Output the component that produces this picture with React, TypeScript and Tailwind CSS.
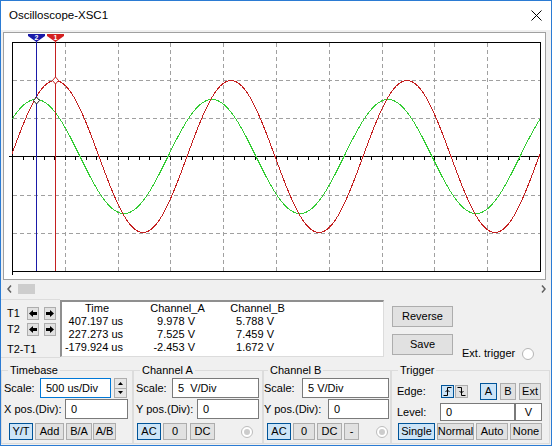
import React from 'react';

const RED = '#c42020';
const GREEN = '#33cc33';

function wave(amp: number, phase: number) {
  const pts: string[] = [];
  for (let x = 12; x <= 540; x++) {
    const y = 156.5 - amp * Math.sin((2 * Math.PI * (x - phase)) / 176);
    pts.push(`${x},${y.toFixed(1)}`);
  }
  return pts.join(' ');
}

function CursorHead({ x, label, color }: { x: number; label: string; color: string }) {
  return (
    <g>
      <polygon points={`${x - 8},34 ${x + 9},34 ${x + 9},36 ${x + 0.5},42 ${x - 8},36`} fill={color} />
      <text x={x + 0.5} y={39.5} fontSize="7" fontWeight="bold" fill="#fff" textAnchor="middle" fontFamily="Liberation Sans, Arial, sans-serif">
        {label}
      </text>
    </g>
  );
}

function Scope() {
  const vx = [65, 118, 170, 223, 276, 329, 382, 434, 487];
  const hy = [80, 118, 195, 233];
  const ticks = Array.from({ length: 49 }, (_, k) => Math.round(12 + 10.56 * (k + 1)) + 0.5);
  return (
    <svg width="541" height="246" viewBox="4 33 541 246" className="block">
      <g stroke="#a0a0a0" strokeDasharray="4 3" shapeRendering="crispEdges">
        {vx.map((x) => (
          <line key={x} x1={x + 0.5} y1={43} x2={x + 0.5} y2={271} />
        ))}
        {hy.map((y) => (
          <line key={y} x1={13} y1={y + 0.5} x2={540} y2={y + 0.5} />
        ))}
      </g>
      <g stroke="#000" shapeRendering="crispEdges" fill="none">
        <rect x={12.5} y={42.5} width={528} height={229} />
        <line x1={12.5} y1={271} x2={12.5} y2={275} />
        <line x1={9} y1={156.5} x2={541} y2={156.5} />
        {ticks.map((x) => (
          <line key={x} x1={x} y1={156} x2={x} y2={159.5} />
        ))}
      </g>
      <polyline points={wave(57, -8)} fill="none" stroke={GREEN} strokeWidth={1} shapeRendering="crispEdges" />
      <polyline points={wave(76, 11)} fill="none" stroke={RED} strokeWidth={1} shapeRendering="crispEdges" />
      <line x1={36.5} y1={36} x2={36.5} y2={271} stroke="#1a1aa8" shapeRendering="crispEdges" />
      <line x1={55.5} y1={36} x2={55.5} y2={271} stroke={RED} shapeRendering="crispEdges" />
      <CursorHead x={36} label="2" color="#1a1aa8" />
      <CursorHead x={55} label="1" color="#d42020" />
      <polygon points="55.5,77 58.5,80.5 55.5,84 52.5,80.5" fill="#fff" stroke={RED} />
      <polygon points="36.5,97 39.5,100.5 36.5,104 33.5,100.5" fill="#fff" stroke="#222" />
    </svg>
  );
}

function Btn({ label, on = false, className = '' }: { label: React.ReactNode; on?: boolean; className?: string }) {
  return (
    <div
      className={`flex items-center justify-center h-[17px] border leading-none shrink-0 ${
        on ? 'bg-[#cce4f7] border-[#005499]' : 'bg-[#e1e1e1] border-[#adadad]'
      } ${className}`}
    >
      {label}
    </div>
  );
}

function Field({ value, className = '', focus = false }: { value: string; className?: string; focus?: boolean }) {
  return (
    <div
      className={`h-[20px] bg-white border flex items-center pl-[5px] whitespace-pre shrink-0 ${
        focus ? 'border-[#0078d7]' : 'border-[#7a7a7a]'
      } ${className}`}
    >
      {value}
    </div>
  );
}

function Radio({ className = '' }: { className?: string }) {
  return (
    <div className={`w-[12px] h-[12px] rounded-full border border-[#bcbcbc] bg-white flex items-center justify-center shrink-0 ${className}`}>
      <div className="w-[6px] h-[6px] rounded-full bg-[#cccccc]" />
    </div>
  );
}

function ArrowBtn({ dir }: { dir: 'l' | 'r' }) {
  return (
    <div className="w-[12px] h-[13px] bg-[#e1e1e1] border border-[#adadad] flex items-center justify-center shrink-0">
      <svg width="8" height="7" viewBox="0 0 8 7">
        {dir === 'l' ? (
          <polygon points="0,3.5 4,0 4,2 8,2 8,5 4,5 4,7" fill="#000" />
        ) : (
          <polygon points="8,3.5 4,0 4,2 0,2 0,5 4,5 4,7" fill="#000" />
        )}
      </svg>
    </div>
  );
}

function Group({ title, className, legendClass, children }: { title: string; className: string; legendClass: string; children: React.ReactNode }) {
  return (
    <fieldset className={`h-[80px] border border-[#dcdcdc] shrink-0 ${className}`}>
      <legend className={`px-[2px] leading-[13px] ${legendClass}`}>{title}</legend>
      {children}
    </fieldset>
  );
}

export default function App() {
  return (
    <div className="w-[552px] h-[446px] border border-[#2b7bd3] bg-[#f0f0f0] flex flex-col font-['Liberation_Sans',Arial,sans-serif] text-[11px] text-black overflow-hidden select-none">
      <div className="h-[29px] bg-white flex items-center justify-between pl-[8px] pr-[9px] shrink-0">
        <span className="text-[11.5px]">Oscilloscope-XSC1</span>
        <svg width="11" height="11" viewBox="0 0 11 11">
          <path d="M0.5 0.5 L10.5 10.5 M10.5 0.5 L0.5 10.5" stroke="#000" strokeWidth="1" />
        </svg>
      </div>

      <div className="pt-[2px] pl-[2px] shrink-0">
        <div className="w-[543px] h-[248px] border border-[#a0a0a0] bg-white">
          <Scope />
        </div>
      </div>

      <div className="h-[17px] flex items-center justify-between shrink-0">
        <div className="flex items-center">
          <svg width="5" height="8" viewBox="0 0 5 8" className="ml-[6px]">
            <path d="M4 0.5 L1 4 L4 7.5" stroke="#606060" strokeWidth="1.5" fill="none" />
          </svg>
          <div className="ml-[6px] w-[17px] h-[10px] bg-[#cdcdcd]" />
        </div>
        <svg width="5" height="8" viewBox="0 0 5 8" className="mr-[5px]">
          <path d="M1 0.5 L4 4 L1 7.5" stroke="#606060" strokeWidth="1.5" fill="none" />
        </svg>
      </div>

      <div className="h-[62px] flex shrink-0">
        <div className="w-[59px] mt-[2px] h-[59px] border-t border-b border-[#dcdcdc] pl-[6px] pt-[7px] flex flex-col shrink-0">
          <div className="flex items-center h-[13px]">
            <span className="w-[20px]">T1</span>
            <ArrowBtn dir="l" />
            <div className="ml-[5px]">
              <ArrowBtn dir="r" />
            </div>
          </div>
          <div className="flex items-center h-[13px] mt-[3px]">
            <span className="w-[20px]">T2</span>
            <ArrowBtn dir="l" />
            <div className="ml-[5px]">
              <ArrowBtn dir="r" />
            </div>
          </div>
          <div className="h-[13px] leading-[13px] mt-[7px]">T2-T1</div>
        </div>

        <div className="mt-[3px] h-[57px] w-[324px] bg-white border-t-2 border-l-2 border-r border-b border-t-[#8f8f8f] border-l-[#8f8f8f] border-r-[#dcdcdc] border-b-[#dcdcdc] flex leading-[13px] shrink-0">
          <div className="w-[70px] flex flex-col">
            <div className="text-center">Time</div>
            <div className="text-right pr-[9px]">407.197 us</div>
            <div className="text-right pr-[9px]">227.273 us</div>
            <div className="text-right pr-[9px]">-179.924 us</div>
          </div>
          <div className="w-[91px] flex flex-col">
            <div className="text-center">Channel_A</div>
            <div className="text-right pr-[28px]">9.978 V</div>
            <div className="text-right pr-[28px]">7.525 V</div>
            <div className="text-right pr-[28px]">-2.453 V</div>
          </div>
          <div className="w-[69px] flex flex-col">
            <div className="text-center">Channel_B</div>
            <div className="text-right pr-[18px]">5.788 V</div>
            <div className="text-right pr-[18px]">7.459 V</div>
            <div className="text-right pr-[18px]">1.672 V</div>
          </div>
        </div>

        <div className="ml-[8px] mt-[9px] flex flex-col gap-[7px] shrink-0">
          <div className="w-[61px] h-[21px] bg-[#e1e1e1] border border-[#adadad] flex items-center justify-center">Reverse</div>
          <div className="w-[61px] h-[21px] bg-[#e1e1e1] border border-[#adadad] flex items-center justify-center">Save</div>
        </div>

        <div className="ml-[9px] mt-[50px] h-[13px] flex items-center shrink-0">
          <span>Ext. trigger</span>
          <div className="ml-[7px] w-[12px] h-[12px] rounded-full border border-[#b5b5b5] bg-white" />
        </div>
      </div>

      <div className="mt-[5px] flex shrink-0">
        <Group title="Timebase" className="w-[132px]" legendClass="ml-[6px]">
          <div className="mt-[1px] h-[20px] flex items-center pl-[2px]">
            <span className="w-[36px]">Scale:</span>
            <Field value="500 us/Div" focus className="w-[71px]" />
            <div className="ml-[3px] w-[13px] h-[20px] border border-[#adadad] bg-[#e6e6e6] flex flex-col">
              <div className="flex-1 flex items-center justify-center">
                <svg width="5" height="3" viewBox="0 0 5 3"><polygon points="0,3 2.5,0 5,3" fill="#000" /></svg>
              </div>
              <div className="flex-1 flex items-center justify-center border-t border-[#adadad]">
                <svg width="5" height="3" viewBox="0 0 5 3"><polygon points="0,0 2.5,3 5,0" fill="#000" /></svg>
              </div>
            </div>
          </div>
          <div className="mt-[1px] h-[20px] flex items-center pl-[2px]">
            <span className="w-[61px]">X pos.(Div):</span>
            <Field value="0" className="w-[63px]" />
          </div>
          <div className="mt-[4px] flex pl-[7px]">
            <Btn label="Y/T" on className="w-[24px]" />
            <Btn label="Add" className="ml-[2px] w-[29px]" />
            <Btn label="B/A" className="ml-[2px] w-[26px]" />
            <Btn label="A/B" className="ml-[1px] w-[23px]" />
          </div>
        </Group>

        <Group title="Channel A" className="w-[130px]" legendClass="ml-[6px]">
          <div className="mt-[1px] h-[20px] flex items-center pl-[2px]">
            <span className="w-[36px]">Scale:</span>
            <Field value="5  V/Div" className="w-[87px]" />
          </div>
          <div className="mt-[1px] h-[20px] flex items-center pl-[2px]">
            <span className="w-[61px]">Y pos.(Div):</span>
            <Field value="0" className="w-[62px]" />
          </div>
          <div className="mt-[4px] flex items-center pl-[3px]">
            <Btn label="AC" on className="w-[24px]" />
            <Btn label="0" className="ml-[2px] w-[24px]" />
            <Btn label="DC" className="ml-[3px] w-[25px]" />
            <Radio className="ml-[26px]" />
          </div>
        </Group>

        <Group title="Channel B" className="w-[128px]" legendClass="ml-[4px]">
          <div className="mt-[1px] h-[20px] flex items-center">
            <span className="w-[38px]">Scale:</span>
            <Field value="5 V/Div" className="w-[87px]" />
          </div>
          <div className="mt-[1px] h-[20px] flex items-center">
            <span className="w-[64px]">Y pos.(Div):</span>
            <Field value="0" className="w-[61px]" />
          </div>
          <div className="mt-[4px] flex items-center pl-[3px]">
            <Btn label="AC" on className="w-[24px]" />
            <Btn label="0" className="ml-[2px] w-[22px]" />
            <Btn label="DC" className="ml-[2px] w-[25px]" />
            <Btn label="-" className="ml-[2px] w-[15px]" />
            <Radio className="ml-[17px]" />
          </div>
        </Group>

        <Group title="Trigger" className="w-[159px]" legendClass="ml-[6px]">
          <div className="mt-[6px] h-[17px] flex items-center pl-[5px]">
            <span className="w-[44px]">Edge:</span>
            <div className="w-[13px] h-[13px] border border-[#005499] bg-[#cce4f7] flex items-center justify-center shrink-0">
              <svg width="9" height="9" viewBox="0 0 9 9">
                <path d="M0.5 8.5 H4.5 V0.5 H8.5 M2.5 5 L4.5 3 L6.5 5" stroke="#000" fill="none" strokeWidth="1" />
              </svg>
            </div>
            <div className="ml-[1px] w-[13px] h-[13px] border border-[#adadad] bg-[#e1e1e1] flex items-center justify-center shrink-0">
              <svg width="9" height="9" viewBox="0 0 9 9">
                <path d="M0.5 0.5 H4.5 V8.5 H8.5 M2.5 4 L4.5 6 L6.5 4" stroke="#000" fill="none" strokeWidth="1" />
              </svg>
            </div>
            <Btn label="A" on className="ml-[12px] w-[17px]" />
            <Btn label="B" className="ml-[3px] w-[16px]" />
            <Btn label="Ext" className="ml-[3px] w-[22px]" />
          </div>
          <div className="mt-[3px] h-[18px] flex items-center pl-[5px]">
            <span className="w-[43px]">Level:</span>
            <div className="w-[75px] h-[18px] bg-white border border-[#7a7a7a] flex items-center pl-[5px]">0</div>
            <div className="w-[27px] h-[18px] bg-white border border-[#7a7a7a] flex items-center justify-center">V</div>
          </div>
          <div className="mt-[2px] flex pl-[6px]">
            <Btn label="Single" on className="w-[37px]" />
            <Btn label="Normal" className="ml-[2px] w-[37px]" />
            <Btn label="Auto" className="ml-[2px] w-[32px]" />
            <Btn label="None" className="ml-[2px] w-[32px]" />
          </div>
        </Group>
      </div>
    </div>
  );
}
